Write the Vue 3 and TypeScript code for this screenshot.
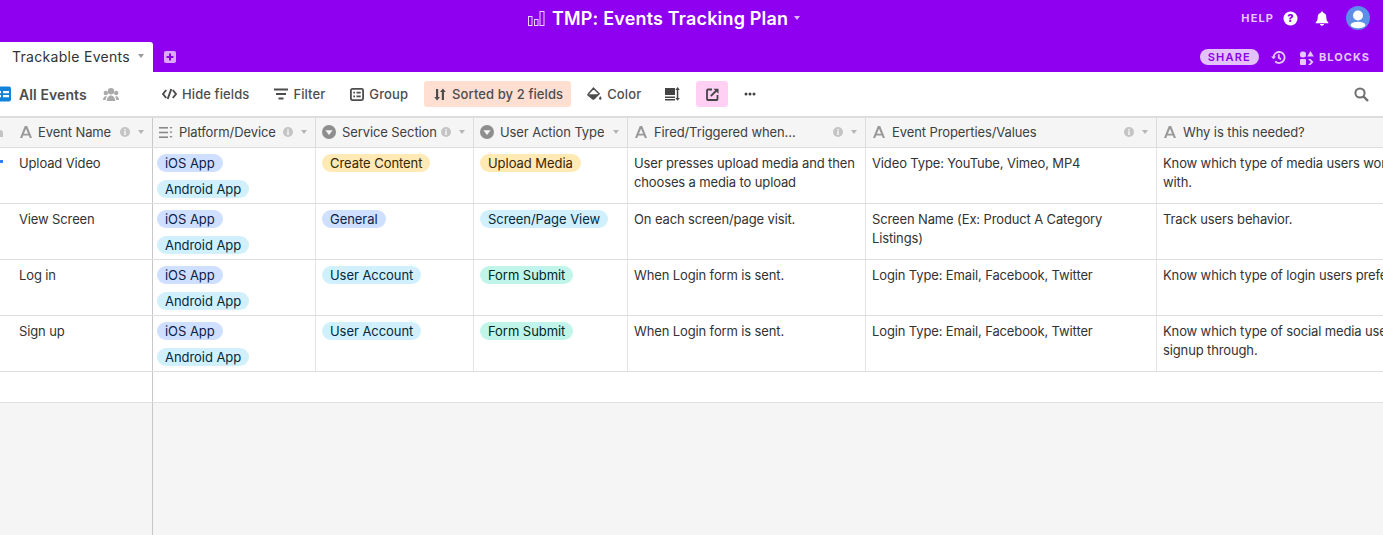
<script setup lang="ts">
interface Tag { label: string; tone: string }
interface Row {
  name: string; platforms: Tag[]; section: Tag; action: Tag;
  fired: string; props: string; why: string;
}
const ios: Tag = { label: 'iOS App', tone: 'blue' };
const android: Tag = { label: 'Android App', tone: 'cyan' };
const rows: Row[] = [
  { name: 'Upload Video', platforms: [ios, android], section: { label: 'Create Content', tone: 'yellow' }, action: { label: 'Upload Media', tone: 'yellow' }, fired: 'User presses upload media and then chooses a media to upload', props: 'Video Type: YouTube, Vimeo, MP4', why: 'Know which type of media users work with.' },
  { name: 'View Screen', platforms: [ios, android], section: { label: 'General', tone: 'blue' }, action: { label: 'Screen/Page View', tone: 'cyan' }, fired: 'On each screen/page visit.', props: 'Screen Name (Ex: Product A Category Listings)', why: 'Track users behavior.' },
  { name: 'Log in', platforms: [ios, android], section: { label: 'User Account', tone: 'cyan' }, action: { label: 'Form Submit', tone: 'teal' }, fired: 'When Login form is sent.', props: 'Login Type: Email, Facebook, Twitter', why: 'Know which type of login users prefer.' },
  { name: 'Sign up', platforms: [ios, android], section: { label: 'User Account', tone: 'cyan' }, action: { label: 'Form Submit', tone: 'teal' }, fired: 'When Login form is sent.', props: 'Login Type: Email, Facebook, Twitter', why: 'Know which type of social media users signup through.' },
];
interface Col { label: string; icon: string; info: boolean; caret: boolean; cls: string }
const cols: Col[] = [
  { label: 'Event Name', icon: 'text', info: true, caret: true, cls: 'c0' },
  { label: 'Platform/Device', icon: 'multi', info: true, caret: true, cls: 'c1' },
  { label: 'Service Section', icon: 'single', info: true, caret: true, cls: 'c2' },
  { label: 'User Action Type', icon: 'single', info: false, caret: true, cls: 'c3' },
  { label: 'Fired/Triggered when...', icon: 'text', info: true, caret: true, cls: 'c4' },
  { label: 'Event Properties/Values', icon: 'text', info: true, caret: true, cls: 'c5' },
  { label: 'Why is this needed?', icon: 'text', info: false, caret: false, cls: 'c6' },
];
</script>

<template>
  <div class="app">
    <header class="top">
      <div class="titlebar">
        <div class="title">
          <svg class="logo" width="17" height="15" viewBox="0 0 17 15" fill="none" stroke="#ecd4fc" stroke-width="1">
            <rect x="0.500" y="5.500" width="3.500" height="9" /><rect x="6.500" y="8.500" width="3.500" height="6" /><rect x="12" y="0.500" width="4" height="14" />
          </svg>
          <span class="titletext">TMP: Events Tracking Plan</span>
          <i class="caret white"></i>
        </div>
        <div class="account">
          <span class="help">HELP</span>
          <svg width="15" height="15" viewBox="0 0 15 15"><circle cx="7.500" cy="7.500" r="7" fill="#fff" /><text x="7.500" y="11.200" text-anchor="middle" font-size="11" font-weight="800" fill="#9000f0" font-family="Inter">?</text></svg>
          <svg class="bell" width="14" height="15" viewBox="0 0 14 15"><path fill="#fff" d="M7 0.600c.8 0 1.300.6 1.300 1.200C10.300 2.400 11.300 4 11.300 6.200c0 2.700.7 3.900 2 5.100v.9H.7v-.9c1.300-1.200 2-2.400 2-5.100C2.700 4 3.700 2.400 5.700 1.800 5.700 1.200 6.200.6 7 .6zM5 13h4c0 1-.9 1.700-2 1.700S5 14 5 13z" /></svg>
          <svg class="avatar" width="24" height="24" viewBox="0 0 24 24">
            <circle cx="12" cy="12" r="12" fill="#5b8fe8" />
            <circle cx="12" cy="9.500" r="5" fill="#fff" />
            <ellipse cx="12" cy="19" rx="7.500" ry="3.200" fill="#fff" />
          </svg>
        </div>
      </div>
      <div class="tabbar">
        <div class="tab">
          <span>Trackable Events</span>
          <i class="caret grey"></i>
        </div>
        <svg class="plus" width="12" height="12" viewBox="0 0 12 12"><rect width="12" height="12" rx="2" fill="#dcaafa" /><path d="M6 2.600v6.800M2.600 6h6.800" stroke="#8a00e6" stroke-width="2" /></svg>
        <div class="tabactions">
          <span class="share">SHARE</span>
          <svg width="15" height="15" viewBox="0 0 15 15" fill="none" stroke="#e6c8fb" stroke-width="1.800"><path d="M2.600 7.500a5.500 5.500 0 1 1 1.600 3.900" /><path d="M7.800 4.300v3.500l2.300 1.400" /><path d="M0 6.500h5L2.600 9.300z" fill="#e6c8fb" stroke="none" /></svg>
          <span class="blocks">
            <svg width="14" height="15" viewBox="0 0 14 15" fill="#e6c8fb"><rect x="0" y="1.500" width="6" height="6" rx="2.500" /><path d="M10.500 1l3.300 5.500H7.200z" /><rect x="0" y="9" width="6" height="6" rx="1" /><path d="M8 9l2.500 0 3 3-3 3H8l3-3z" /></svg>
            BLOCKS
          </span>
        </div>
      </div>
    </header>

    <nav class="toolbar">
      <div class="view">
        <svg class="viewicon" width="11" height="16" viewBox="0 0 11 16"><rect x="-4" y="0.500" width="15" height="15" rx="2" fill="#1283da" /><path d="M-2 5h3v2.200h-3zM-2 9h3v2.200h-3zM3 5h6v2.200H3zM3 9h6v2.200H3z" fill="#fff" /></svg>
        <strong>All Events</strong>
        <svg class="people" width="16" height="13" viewBox="0 0 16 13" fill="#aaa"><circle cx="8" cy="3.200" r="3.200" /><circle cx="2.800" cy="5" r="2.200" /><circle cx="13.200" cy="5" r="2.200" /><path d="M3.800 13c0-3 1.800-5.500 4.200-5.500s4.200 2.500 4.200 5.500z" /><path d="M0 12c0-2 1-3.800 2.800-3.800.4 0 .7.100 1 .2C3 9.500 2.800 11 2.800 12zM16 12c0-2-1-3.800-2.800-3.800-.4 0-.7.100-1 .2.800 1.100 1 2.600 1 3.600z" /></svg>
      </div>
      <div class="tools">
        <span class="tool hide">
          <svg width="15" height="12" viewBox="0 0 15 12" fill="none" stroke="#4d4d4d" stroke-width="2"><path d="M4.200 2L1 6l3.200 4M10.800 2L14 6l-3.200 4M9.300 1L5.700 11" /></svg>
          Hide fields
        </span>
        <span class="tool filter">
          <svg width="14" height="12" viewBox="0 0 14 12" fill="#4d4d4d"><rect x="0" y="0.500" width="14" height="2" /><rect x="2" y="5" width="10" height="2" /><rect x="4.500" y="9.500" width="5" height="2" /></svg>
          Filter
        </span>
        <span class="tool group">
          <svg width="14" height="13" viewBox="0 0 14 13" fill="none" stroke="#4d4d4d" stroke-width="1.800"><rect x="0.900" y="0.900" width="12.200" height="11.200" rx="1.500" /><path d="M3.300 4.700h1.700M6.500 4.700h4.200M3.300 8.300h1.700M6.500 8.300h4.200" /></svg>
          Group
        </span>
        <span class="tool sorted">
          <svg width="12" height="13" viewBox="0 0 12 13" fill="#4d4d4d"><path d="M2 1h2.200v8H6l-2.900 3.600L.2 9H2zM7.800 12h2.200V4h1.800L8.900.4 6 4h1.800z" /></svg>
          Sorted by 2 fields
        </span>
        <span class="tool color">
          <svg width="15" height="14" viewBox="0 0 15 14"><path d="M6.500 1.200l5.600 5.600-5 5a.9.9 0 0 1-1.300 0L1.300 8.300a.9.9 0 0 1 0-1.300z" fill="#fff" stroke="#4d4d4d" stroke-width="1.500" /><path d="M1.300 7.200h10.600l-4.800 4.700a.9.9 0 0 1-1.300 0z" fill="#4d4d4d" /><path d="M13.300 9c.6 1 1.200 1.800 1.200 2.500a1.200 1.200 0 0 1-2.400 0c0-.7.600-1.500 1.200-2.500z" fill="#4d4d4d" /></svg>
          Color
        </span>
        <span class="tool height">
          <svg width="15" height="14" viewBox="0 0 15 14" fill="#444"><rect x="0" y="1" width="10" height="7" /><rect x="0" y="9.500" width="10" height="1.500" /><rect x="0" y="12" width="10" height="1.500" /><path d="M11.800 3h1.500v8h1.500l-2.250 2.800L10.300 11h1.500zM12.550 0l2.250 3h-4.500z" /></svg>
        </span>
        <span class="tool shareview">
          <svg width="13" height="13" viewBox="0 0 13 13" fill="none" stroke="#444" stroke-width="1.800"><path d="M6 1.500H2a1 1 0 0 0-1 1V11a1 1 0 0 0 1 1h8.500a1 1 0 0 0 1-1V7" /><path d="M4.800 8.200L11 2" /><path d="M7.500 .8h5v5z" fill="#444" stroke="none" /></svg>
        </span>
        <span class="tool more">
          <svg width="12" height="4" viewBox="0 0 12 4" fill="#444"><circle cx="2" cy="2" r="1.500" /><circle cx="6" cy="2" r="1.500" /><circle cx="10" cy="2" r="1.500" /></svg>
        </span>
      </div>
      <svg class="search" width="15" height="15" viewBox="0 0 15 15" fill="none" stroke="#6f6f6f" stroke-width="2"><circle cx="6" cy="6" r="4.600" /><path d="M9.500 9.500L14 14" stroke-width="2.400" /></svg>
    </nav>

    <section class="grid">
      <div class="edge-a"></div>
      <div class="edge-dot"></div>
      <div class="row head">
        <div v-for="c in cols" :key="c.label" class="cell" :class="c.cls">
          <svg v-if="c.icon === 'text'" class="ficon atext" width="12" height="12" viewBox="0 0 12 12" fill="#999"><path d="M4.800 0h2.400L12 12H9.800l-1-2.600H3.200L2.200 12H0zM6 2.800L3.900 7.700h4.200z" /></svg>
          <svg v-else-if="c.icon === 'multi'" class="ficon" width="14" height="13" viewBox="0 0 14 13" fill="#8a8a8a"><rect y="1" width="9" height="1.600" /><rect y="5.700" width="9" height="1.600" /><rect y="10.400" width="9" height="1.600" /><path d="M10.500 1h3l-1.500 2zM10.500 5.500h3l-1.500 2zM10.500 10h3L12 12z" /></svg>
          <svg v-else class="ficon" width="14" height="14" viewBox="0 0 14 14"><circle cx="7" cy="7" r="7" fill="#8e8e8e" /><path d="M3.400 5.200h7.200L7 10z" fill="#f5f5f5" /></svg>
          <span class="flabel">{{ c.label }}</span>
          <svg v-if="c.info" class="info" width="10" height="10" viewBox="0 0 10 10"><circle cx="5" cy="5" r="5" fill="#c4c4c4" /><rect x="4.200" y="4.200" width="1.600" height="3.800" fill="#f5f5f5" /><rect x="4.200" y="2" width="1.600" height="1.500" fill="#f5f5f5" /></svg>
          <i v-if="c.caret" class="caret grey small"></i>
        </div>
      </div>
      <div v-for="r in rows" :key="r.name" class="row data">
        <div class="cell c0 name">{{ r.name }}</div>
        <div class="cell c1 tags">
          <span v-for="p in r.platforms" :key="p.label" class="tag" :class="p.tone">{{ p.label }}</span>
        </div>
        <div class="cell c2 tags"><span class="tag" :class="r.section.tone">{{ r.section.label }}</span></div>
        <div class="cell c3 tags"><span class="tag" :class="r.action.tone">{{ r.action.label }}</span></div>
        <div class="cell c4 text">{{ r.fired }}</div>
        <div class="cell c5 text">{{ r.props }}</div>
        <div class="cell c6 text">{{ r.why }}</div>
      </div>
      <div class="row add">
        <div class="cell c0"></div>
        <div class="cell fillcell"></div>
      </div>
      <div class="rest">
        <div class="cell c0"></div>
      </div>
    </section>
  </div>
</template>

<style>
html, body { margin: 0; padding: 0; background: #fff; overflow: hidden; }
</style>

<style scoped>
.app {
  width: 1383px; height: 535px; overflow: hidden; display: flex; flex-direction: column;
  font-family: Inter, "Liberation Sans", sans-serif; font-size: 13px; color: #333;
}
.top { background: #9000f0; height: 72px; flex: none; display: flex; flex-direction: column; }
.titlebar { height: 42px; position: relative; display: flex; align-items: center; justify-content: flex-end; padding: 0 13px 6px 0; box-sizing: border-box; }
.title { position: absolute; left: 528px; top: 6px; display: flex; align-items: center; color: #fff; font-size: 18px; font-weight: 600; line-height: 24px; white-space: nowrap; letter-spacing: .17px; }
.titletext { padding-top: 1px; }
.logo { margin-right: 7px; }
.caret { display: block; width: 0; height: 0; border-left: 3.500px solid transparent; border-right: 3.500px solid transparent; }
.caret.white { border-top: 4px solid #e0b8fa; margin: 0 0 1px 6px; }
.caret.grey { border-top: 4px solid #999; }
.caret.small { border-top-color: #b5b5b5; margin-left: 8px; }
.account { display: flex; align-items: center; }
.help { color: #e6c8fb; font-size: 11px; font-weight: 700; letter-spacing: 1.100px; margin-right: 9px; }
.bell { margin-left: 17px; }
.avatar { margin-left: 17px; }
.tabbar { height: 30px; display: flex; align-items: center; }
.tab { width: 153px; height: 30px; box-sizing: border-box; background: #fff; border-top-right-radius: 3px; display: flex; align-items: center; padding: 0 9px 2px 12px; justify-content: space-between; font-size: 14px; color: #333; letter-spacing: .3px; }
.plus { margin-left: 11px; }
.tabactions { margin-left: auto; padding-right: 13px; display: flex; align-items: center; }
.share { background: #e3c2fb; color: #8a00e6; font-size: 11px; font-weight: 600; letter-spacing: 1.200px; height: 16px; line-height: 16px; padding: 0 8px; border-radius: 8px; margin-right: 12px; }
.blocks { display: flex; align-items: center; gap: 5px; margin-left: 14px; color: #e6c8fb; font-size: 11px; font-weight: 700; letter-spacing: 1.050px; }

.toolbar { height: 44px; flex: none; display: flex; align-items: center; box-sizing: border-box; padding-right: 14px; }
.view { width: 153px; flex: none; display: flex; align-items: center; }
.viewicon { flex: none; margin-right: 8px; }
.view strong { font-size: 14px; font-weight: 600; color: #4d4d4d; letter-spacing: .1px; }
.people { margin-left: 16px; flex: none; }
.tools { display: flex; align-items: center; margin-left: 1px; gap: 8px; color: #4d4d4d; }
.tool { display: flex; align-items: center; height: 26px; gap: 5px; padding: 0 8px; border-radius: 3px; white-space: nowrap; font-weight: 500; font-size: 13px; letter-spacing: .1px; }
.hide { padding-right: 9px; }
.filter { padding-right: 9px; }
.sorted { background: #ffdfd1; padding-left: 10px; gap: 6px; }
.height { padding: 0 8px; }
.shareview { background: #ffd0f4; width: 32px; box-sizing: border-box; justify-content: center; padding: 0; }
.more { padding: 0 0 0 8px; }
.search { margin-left: auto; }

.grid { flex: 1; position: relative; background: #f5f5f5; display: flex; flex-direction: column; min-height: 0; border-top: 2px solid #ddd; }
.edge-dot { position: absolute; left: 0; top: 42px; width: 3px; height: 3px; background: #2d7ff9; }
.edge-a { position: absolute; left: 0; top: 12px; width: 3px; height: 7px; background: #c4c4c4; border-top-right-radius: 3px; z-index: 1; }
.row { display: grid; grid-template-columns: 153px 163px 158px 154px 238px 291px 260px; flex: none; }
.head { height: 29px; background: #f5f5f5; border-bottom: 1px solid #ddd; }
.data { height: 55px; background: #fff; border-bottom: 1px solid #dedede; }
.add { height: 30px; background: #fff; border-bottom: 1px solid #dedede; }
.fillcell { grid-column: 2 / -1; border-right: 0 !important; }
.rest { flex: 1; display: grid; grid-template-columns: 153px 1fr; min-height: 0; }
.cell { box-sizing: border-box; border-right: 1px solid #e5e5e5; min-width: 0; overflow: hidden; }
.c0 { border-right: 1px solid #c8c8c8; }
.c6 { border-right: 0; }
.head .cell { display: flex; align-items: center; padding: 0 8px 1px 6px; border-right-color: #dcdcdc; }
.head .c0 { padding-left: 20px; border-right-color: #c8c8c8; }
.head .c4, .head .c5, .head .c6 { padding-left: 7px; }
.head .c4 .ficon, .head .c5 .ficon, .head .c6 .ficon { margin-right: 7px; }
.ficon { flex: none; margin-right: 6px; }
.flabel { white-space: nowrap; overflow: hidden; color: #404040; flex: none; letter-spacing: -.1px; }
.info { margin-left: auto; flex: none; }
.head .c3 .caret { margin-left: auto; }
.name { padding: 6px 8px 0 19px; line-height: 18px; color: #333; letter-spacing: -.13px; }
.text { padding: 6px 6px 0 6px; line-height: 19px; color: #333; white-space: normal; letter-spacing: -.13px; }
.tags { display: flex; flex-direction: column; align-items: flex-start; gap: 8px; padding: 6px 4px 0 6px; }
.c1.tags { padding-left: 4px; }
.tag { display: block; height: 18px; line-height: 18px; border-radius: 9px; padding: 0 8px; white-space: nowrap; color: #223; flex: none; letter-spacing: -.05px; }
.tag.blue { background: #cfdfff; color: #102046; }
.tag.cyan { background: #d0f0fd; color: #04283f; }
.tag.yellow { background: #ffeab6; color: #3b2501; }
.tag.teal { background: #c2f5e9; color: #012524; }
</style>
